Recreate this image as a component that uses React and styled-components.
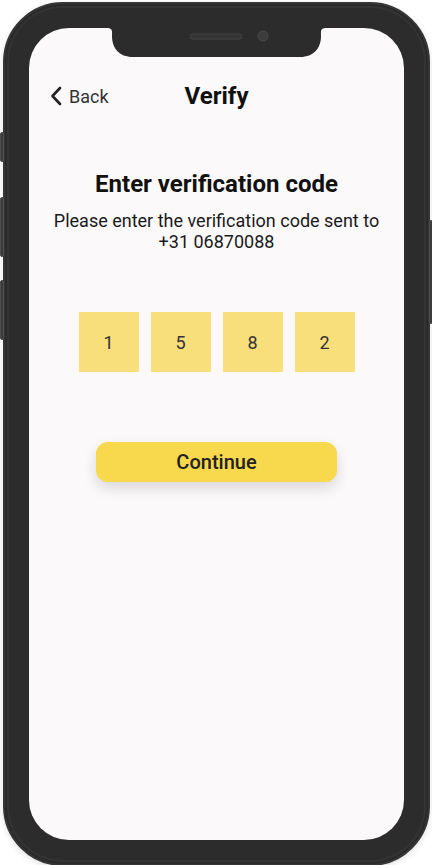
import React from 'react';
import styled, { createGlobalStyle } from 'styled-components';

const GlobalStyle = createGlobalStyle`
  html, body {
    margin: 0;
    padding: 0;
    background: #ffffff;
  }
  * {
    box-sizing: border-box;
  }
`;

const Stage = styled.div`
  width: 432px;
  height: 865px;
  overflow: hidden;
  padding: 2px 0 0 3px;
  background: #ffffff;
  font-family: Roboto, 'Noto Sans', sans-serif;
`;

const Phone = styled.div`
  position: relative;
  width: 427px;
  height: 864px;
  padding: 24px;
  border-radius: 60px;
  background: #2c2c2c;
  border: 2px solid #363636;
  box-shadow: inset 0 0 0 2px #2a2a2a, inset 0 0 0 4px #343434, 0 2px 6px rgba(0, 0, 0, 0.12);
`;

const SideButton = styled.div`
  position: absolute;
  top: ${({ top }) => top}px;
  height: ${({ length }) => length}px;
  width: 4px;
  ${({ side }) => (side === 'left' ? 'left: -5px;' : 'right: -5px;')}
  background: #3c3c3c;
  border: 1px solid #4e4e4e;
  border-radius: 2px;
`;

const Screen = styled.div`
  position: relative;
  width: 375px;
  height: 812px;
  border-radius: 40px;
  background: #fbf9fa;
  overflow: hidden;
  display: flex;
  flex-direction: column;
  align-items: center;
`;

const Notch = styled.svg`
  position: absolute;
  top: 0;
  left: 77px;
`;

const Header = styled.div`
  width: 100%;
  height: 40px;
  margin-top: 48px;
  display: grid;
  grid-template-columns: 1fr auto 1fr;
  align-items: center;
`;

const BackButton = styled.button`
  justify-self: start;
  display: flex;
  align-items: center;
  gap: 7px;
  margin-left: 21px;
  padding: 0;
  border: none;
  background: none;
  font-family: inherit;
  font-size: 18px;
  color: #333333;
  cursor: pointer;
`;

const HeaderTitle = styled.h1`
  margin: 0;
  font-size: 24px;
  font-weight: 700;
  color: #111111;
`;

const Title = styled.h2`
  margin: 54px 0 0;
  font-size: 24px;
  line-height: 28px;
  font-weight: 700;
  color: #111111;
  text-align: center;
`;

const Subtitle = styled.p`
  margin: 12px 0 0;
  font-size: 18px;
  line-height: 21px;
  color: #1a1a1a;
  text-align: center;
`;

const CodeRow = styled.div`
  margin-top: 60px;
  display: flex;
  gap: 12px;
`;

const CodeBox = styled.div`
  width: 60px;
  height: 60px;
  display: flex;
  align-items: center;
  justify-content: center;
  background: #f9df7b;
  font-size: 18px;
  color: #333333;
`;

const ContinueButton = styled.button`
  margin-top: 70px;
  width: 241px;
  height: 40px;
  border: none;
  border-radius: 12px;
  background: #f8d84c;
  box-shadow: 0 6px 14px rgba(0, 0, 0, 0.14);
  font-family: inherit;
  font-size: 20px;
  font-weight: 500;
  color: #222222;
  cursor: pointer;
`;

const code = ['1', '5', '8', '2'];

const App = () => (
  <Stage>
    <GlobalStyle />
    <Phone>
      <SideButton side="left" top={128} length={30} />
      <SideButton side="left" top={193} length={60} />
      <SideButton side="left" top={276} length={60} />
      <SideButton side="right" top={216} length={104} />
      <Screen>
        <Notch width="221" height="30" viewBox="0 0 221 30">
          <path
            d="M0 0 H221 C214 0 215 3 215 8 C215 20 208 29 194 29 H27 C13 29 6 20 6 8 C6 3 7 0 0 0 Z"
            fill="#2c2c2c"
          />
          <rect x="84" y="6" width="52" height="5" rx="2.5" fill="#333" stroke="#444" strokeWidth="1" />
          <circle cx="157" cy="8" r="5" fill="#3c3c3c" stroke="#4a4a4a" strokeWidth="1" />
        </Notch>
        <Header>
          <BackButton>
            <svg width="12" height="20" viewBox="0 0 12 20">
              <path d="M10 2 L2.5 10 L10 18" fill="none" stroke="#222" strokeWidth="2.6" strokeLinecap="round" strokeLinejoin="round" />
            </svg>
            Back
          </BackButton>
          <HeaderTitle>Verify</HeaderTitle>
        </Header>
        <Title>Enter verification code</Title>
        <Subtitle>
          Please enter the verification code sent to
          <br />
          +31 06870088
        </Subtitle>
        <CodeRow>
          {code.map((digit, i) => (
            <CodeBox key={i}>{digit}</CodeBox>
          ))}
        </CodeRow>
        <ContinueButton>Continue</ContinueButton>
      </Screen>
    </Phone>
  </Stage>
);

export default App;
